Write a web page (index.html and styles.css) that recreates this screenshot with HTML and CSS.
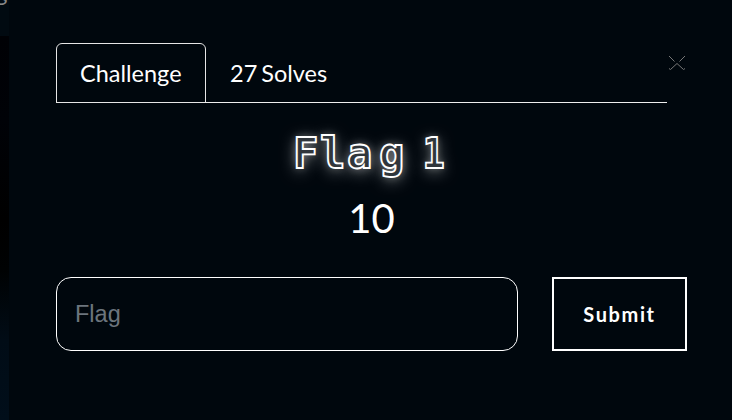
FILE: index.html
```html
<!DOCTYPE html>
<html lang="en">
<head>
<meta charset="utf-8">
<title>Challenge</title>
<link rel="stylesheet" href="styles.css">
</head>
<body>
<div class="page">
  <div class="backdrop"><span class="behind">g</span></div>
  <main class="modal">
    <header class="top">
      <nav class="tabs">
        <a class="tab active">Challenge</a>
        <a class="tab solves">27 Solves</a>
      </nav>
      <button class="close" aria-label="Close">
        <svg width="18" height="16" viewBox="0 0 18 16" fill="none" stroke="#777" stroke-width="1"><path d="M1 1l5.500 5.500M17 1l-5.500 5.500M1 13.500l1.500 1L9 8.500l6.500 6 1.500-1"/></svg>
      </button>
    </header>
    <h1 class="title"><span class="f">F</span><span class="l">l</span><span class="a">a</span><span class="g">g</span> <span class="n">1</span></h1>
    <div class="value">10</div>
    <form class="answer">
      <input class="flag" type="text" placeholder="Flag">
      <button class="submit" type="button">Submit</button>
    </form>
  </main>
</div>
</body>
</html>
```
FILE: styles.css
```css
* { box-sizing: border-box; }
body {
  margin: 0;
  background: #00070d;
  color: #fff;
  font-family: Lato, sans-serif;
}
.page { display: flex; width: 732px; height: 420px; overflow: hidden; }
.backdrop {
  position: relative;
  flex: 0 0 9px;
  overflow: hidden;
  background: linear-gradient(#010a11 0 36px, #000105 36px, #000207 120px, #000 220px, #000203 270px, #010c16 340px, #010e1a 420px);
}
.behind {
  position: absolute;
  left: -5px;
  top: -20px;
  font-size: 24px;
  line-height: 24px;
  color: #888;
}
.modal { flex: 1; min-width: 0; padding: 43px 45px 0 47px; }
.top { display: flex; height: 60px; }
.tabs { display: flex; flex: 0 0 611px; border-bottom: 1px solid #eee; }
.tab {
  height: 60px;
  padding: 0 23px;
  border: 1px solid transparent;
  font-size: 23.5px;
  line-height: 59px;
}
.tab.active { width: 150px; border-color: #e6e6e6; border-radius: 6px 6px 0 0; }
.tab.solves { word-spacing: -2px; }
.close { flex: 0 0 18px; height: 18px; margin: 11px 0 0 1px; padding: 0; border: 0; background: none; }
.close svg { display: block; }
.title {
  display: flex;
  height: 54px;
  margin: 24px 0 0 237px;
  font: bold 42px/54px "DejaVu Sans Mono", monospace;
  color: #30363c;
  -webkit-text-stroke: 1.8px #fff;
  text-shadow: 0 0 8px rgba(255,255,255,.3), 0 3px 16px rgba(255,255,255,.5);
}
.title span { width: 27px; }
.title .a { width: 32px; }
.title .g { width: 42px; }
.title .n { transform: scaleX(.88); }
.value {
  height: 60px;
  margin-top: 7px;
  text-align: center;
  font-size: 40px;
  line-height: 60px;
}
.answer { display: flex; gap: 34px; margin: 29px 0 0; }
.flag {
  flex: 0 0 462px;
  min-width: 0;
  height: 74px;
  padding: 0 18px;
  border: 1px solid #fff;
  border-radius: 15px;
  background: transparent;
  color: #fff;
  font: 23.5px "Liberation Sans", sans-serif;
}
.flag::placeholder { color: #6c757d; opacity: 1; }
.submit {
  flex: 0 0 135px;
  height: 74px;
  padding: 0 0 1px;
  border: 2px solid #fff;
  background: transparent;
  color: #fff;
  font: bold 20px Lato, sans-serif;
  letter-spacing: 1.6px;
}
```
